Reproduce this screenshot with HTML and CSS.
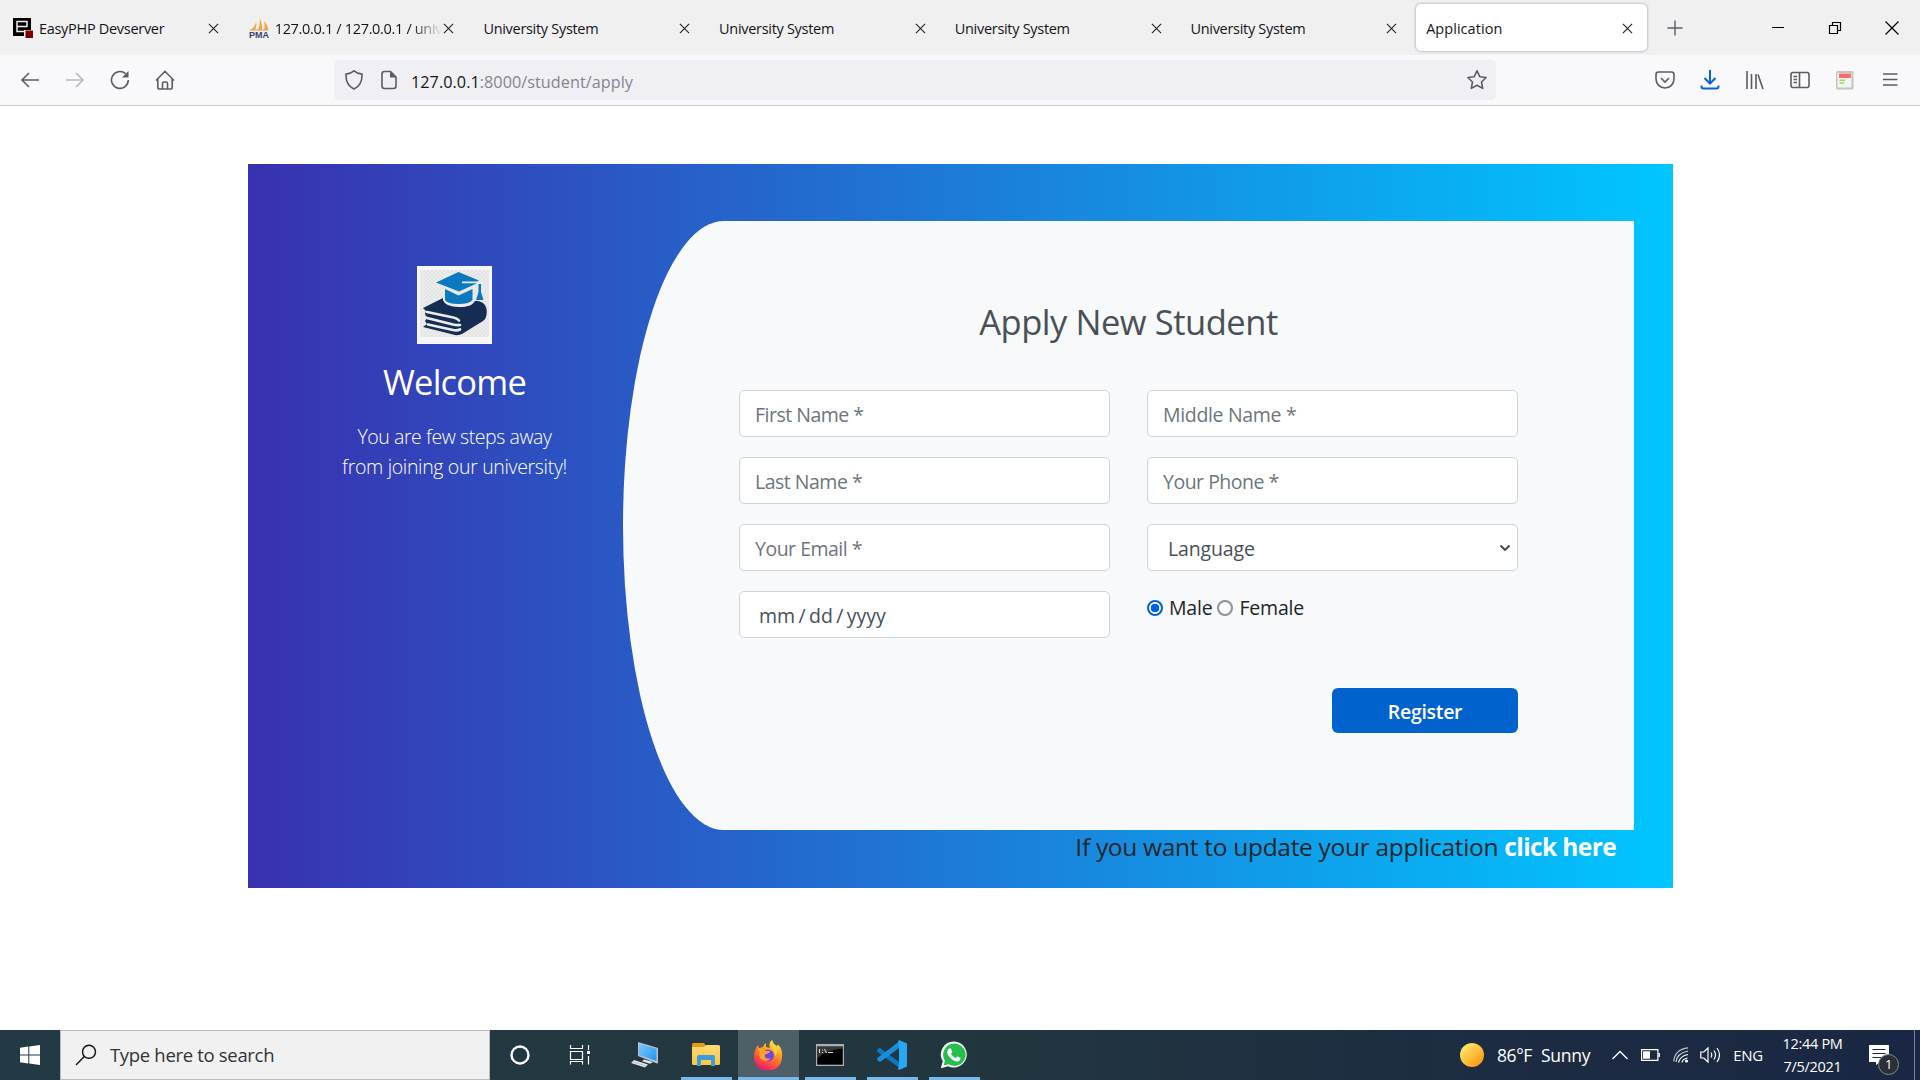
FILE: index.html
```html
<!DOCTYPE html>
<html lang="en">
<head>
<meta charset="utf-8">
<title>Application</title>
<link rel="stylesheet" href="styles.css">
</head>
<body>
<svg class="defs" width="0" height="0">
  <defs>
    <symbol id="x" viewBox="0 0 12 12"><path d="M1 1l10 10M11 1L1 11" fill="none" stroke="#222" stroke-width="1.2"/></symbol>
    <linearGradient id="sun" x1="0" y1="0" x2="1" y2="1"><stop offset="0.15" stop-color="#ffe46b"/><stop offset="1" stop-color="#ff8c00"/></linearGradient>
    <linearGradient id="fox" x1="0.8" y1="0" x2="0.3" y2="1"><stop offset="0" stop-color="#fff44f"/><stop offset="0.35" stop-color="#ffa51e"/><stop offset="0.65" stop-color="#ff5a36"/><stop offset="1" stop-color="#f0107a"/></linearGradient>
    <linearGradient id="scr" x1="0" y1="0" x2="1" y2="1"><stop offset="0" stop-color="#7cc9fb"/><stop offset="1" stop-color="#2196f3"/></linearGradient>
    <linearGradient id="fold" x1="0" y1="0" x2="0" y2="1"><stop offset="0" stop-color="#ffd977"/><stop offset="1" stop-color="#fcc63c"/></linearGradient>
    <pattern id="check" width="4" height="4" patternUnits="userSpaceOnUse"><path fill="#e4e4e4" d="M0 0h4v4H0z"/><path fill="#ececec" d="M0 0h2v2H0zM2 2h2v2H2z"/></pattern>
  </defs>
</svg>

<header class="tabs">
  <div class="tab tab-icon">
    <svg class="fav" width="20" height="20" viewBox="0 0 20 20"><path fill="#000" d="M0 0h18v18H0z"/><path d="M14.5 8.500H4V3.500h10v5M4 8v5.500h8" fill="none" stroke="#efefef" stroke-width="1.500"/><path fill="#efefef" d="M11 12h9v8h-9z"/><path fill="#800000" d="M12.500 12.500H20V20h-7.500z"/></svg>
    <span>EasyPHP Devserver</span><svg class="close" width="11" height="11"><use href="#x"/></svg>
  </div>
  <div class="tab tab-icon">
    <svg class="fav pma" width="20" height="20" viewBox="0 0 20 20"><path fill="#f9a13a" d="M10.500 0c2 4 3 8 2.500 12H9c2-4 2-8 1.500-12zM7 3.500c.7 3 .2 6-1 8.500H2c3-2.500 4.500-5 5-8.500zM15 3c2.500 3 4 6 4.500 9H15c.8-3 .7-6 0-9z"/><path fill="#d9a05b" d="M1 11.500h18v1H1z"/><text x="0" y="19.500" class="pma-text" textLength="20" lengthAdjust="spacingAndGlyphs">PMA</text></svg>
    <span class="long-title">127.0.0.1 / 127.0.0.1 / univ</span><svg class="close" width="11" height="11"><use href="#x"/></svg>
  </div>
  <div class="tab"><span>University System</span><svg class="close" width="11" height="11"><use href="#x"/></svg></div>
  <div class="tab"><span>University System</span><svg class="close" width="11" height="11"><use href="#x"/></svg></div>
  <div class="tab"><span>University System</span><svg class="close" width="11" height="11"><use href="#x"/></svg></div>
  <div class="tab"><span>University System</span><svg class="close" width="11" height="11"><use href="#x"/></svg></div>
  <div class="tab active"><span>Application</span><svg class="close" width="11" height="11"><use href="#x"/></svg></div>
  <svg class="plus" width="16" height="16" viewBox="0 0 16 16"><path d="M8 .5v15M.5 8h15" stroke="#5b5b66" stroke-width="1.400"/></svg>
  <div class="window-buttons">
    <svg width="14" height="14" viewBox="0 0 14 14"><path d="M1 6.500h12" stroke="#000"/></svg>
    <svg width="14" height="14" viewBox="0 0 14 14"><path d="M1.500 4.500h8v8h-8zM4.500 4V1.500h8v8H10" fill="none" stroke="#000" stroke-width="1.200"/></svg>
    <svg width="14" height="14" viewBox="0 0 14 14"><path d="M.5.5l13 13M13.500.5l-13 13" stroke="#000" stroke-width="1.200"/></svg>
  </div>
</header>

<nav class="toolbar">
  <div class="nav-icons">
    <svg width="20" height="20" viewBox="0 0 20 20"><path d="M19 10H2M9 3L2 10l7 7" class="ln"/></svg>
    <svg width="20" height="20" viewBox="0 0 20 20" opacity=".4"><path d="M1 10h17M11 3l7 7-7 7" class="ln"/></svg>
    <svg width="20" height="20" viewBox="0 0 20 20"><path d="M18.300 10A8.400 8.400 0 1 1 15.500 3.700" class="ln"/><path d="M18.500 1v6.500H12z" fill="#5b5b66"/></svg>
    <svg width="20" height="20" viewBox="0 0 20 20"><path d="M1 10.500L10 1.300l9 9.200M2.800 9v8.200q0 1.800 1.800 1.800h10.800q1.800 0 1.800-1.800V9M7.500 19v-5.500q0-1.500 1.500-1.500h2q1.500 0 1.500 1.500V19" class="ln"/></svg>
  </div>
  <div class="urlbar">
    <svg width="20" height="20" viewBox="0 0 20 20"><path d="M10 .9c2 1.800 5 2.800 8 3.200.3 7-2.500 12.500-8 15C4.500 16.600 1.700 11.100 2 4.100c3-.4 6-1.400 8-3.200z" class="ln"/></svg>
    <svg width="20" height="20" viewBox="0 0 20 20"><path d="M11.500 1.500h-6Q3 1.500 3 4v12q0 2.500 2.500 2.500h9Q17 18.500 17 16V7z" class="ln"/><path d="M11 1.500V7.500h6z" fill="#5b5b66"/></svg>
    <span class="url"><b>127.0.0.1</b>:8000/student/apply</span>
    <svg class="star" width="22" height="22" viewBox="0 0 22 22"><path d="M11 1.800l2.800 5.900 6.300.8-4.600 4.500 1.200 6.400L11 16.300l-5.700 3.100 1.200-6.400-4.600-4.500 6.300-.8z" class="ln" stroke-linejoin="round"/></svg>
  </div>
  <div class="tool-icons">
    <svg width="20" height="20" viewBox="0 0 20 20"><path d="M3.500 2h13Q19 2 19 4.500V9A9 9 0 0 1 1 9V4.500Q1 2 3.500 2z" class="ln"/><path d="M6 8l4 4 4-4" class="ln" stroke-width="1.800"/></svg>
    <svg width="20" height="20" viewBox="0 0 20 20"><path d="M10 0v13M4.500 8L10 13.500 15.500 8M1.500 15.500v1q0 2 2 2h13q2 0 2-2v-1" class="ln blue"/></svg>
    <svg width="20" height="20" viewBox="0 0 20 20"><path d="M2 1v18M6.500 4v15M11 4v15M13 4.500L18 19" class="ln"/></svg>
    <svg width="20" height="20" viewBox="0 0 20 20"><path d="M3 2.500h14q2 0 2 2v11q0 2-2 2H3q-2 0-2-2v-11q0-2 2-2zM9.500 2.500v15M3.500 6.500h3.500M3.500 9.500h3.500M3.500 12.500h3.500" class="ln"/></svg>
    <svg width="20" height="20" viewBox="0 0 20 20"><rect x="1" y="1" width="17.500" height="18.500" rx="1.500" fill="#c4c4c0"/><path fill="#f4f4f2" d="M2.500 3h14v14.500h-14z"/><path fill="#ff6b6b" d="M4 3.500h12V8H4z"/><path d="M4.500 10.200H10M4.500 13H9" stroke="#9ed36a" stroke-width="1.500"/></svg>
    <svg width="20" height="20" viewBox="0 0 20 20"><path d="M3 4h14.500M3 9.500h14.500M3 15h14.500" class="ln"/></svg>
  </div>
</nav>

<main>
  <section class="card">
    <aside>
      <svg class="logo" width="75" height="78" viewBox="0 0 75 78">
        <path fill="#f6f6f6" d="M0 0h75v78H0z"/><path fill="url(#check)" d="M3 4h69v67H3z"/>
        <path fill="#152c53" d="M6 42L26 32c-1 9 28 12 32 3 9-1 13 6 11.500 14Q69 53 66 55L45 68Q42 69.500 38 69L6 61l4-3-2-3 2-3-2-4 1-3z"/>
        <path fill="none" stroke="#ececec" stroke-width="2.700" stroke-linecap="round" d="M10 46l24 5q6 1 8 3.500M10 52l26 6.500q4 .8 7 .5M11 58.500l25 5.500q4 .8 7-.5"/>
        <path fill="none" stroke="#eee" stroke-width="2" d="M27 32v2q2 6 15 6t14-6v-4"/>
        <path fill="#0a79bf" d="M19 16.500L41.500 6 62 14.500 60 15.500H45v1.800h15L42 25.500zM28 23l13.500 6.500L55.500 23v11q-3 4-14 4t-13.500-4zM61.500 18H64v8l2.500 8h-7.500l2.500-8z"/>
      </svg>
      <h3>Welcome</h3>
      <p><span class="line-a">You are few steps away</span><br>from joining our university!</p>
    </aside>
    <div class="right">
      <div class="panel">
        <h2>Apply New Student</h2>
        <div class="form">
          <div class="control">First Name *</div>
          <div class="control middle">Middle Name *</div>
          <div class="control">Last Name *</div>
          <div class="control">Your Phone *</div>
          <div class="control">Your Email *</div>
          <div class="control select"><span>Language</span><svg width="12" height="8" viewBox="0 0 12 8"><path d="M1.500 1.500L6 6l4.500-4.500" fill="none" stroke="#3c4248" stroke-width="1.900"/></svg></div>
          <div class="control date">mm / dd / yyyy</div>
          <div class="radios"><i class="radio on"></i><span class="male">Male</span><i class="radio"></i><span>Female</span></div>
        </div>
        <div class="actions"><button>Register</button></div>
      </div>
      <div class="update">If you want to update your application <b>click here</b></div>
    </div>
  </section>
</main>

<footer class="taskbar">
  <div class="start"><svg width="20" height="20" viewBox="0 0 20 20"><path fill="#fff" d="M0 2.800l8.300-1.200V9.500H0zM9.300 1.400L20 0v9.500H9.300zM0 10.500h8.300v8L0 17.300zM9.300 10.500H20V20L9.300 18.600z"/></svg></div>
  <div class="search"><svg width="22" height="22" viewBox="0 0 22 22"><circle cx="14" cy="7.800" r="6.500" fill="none" stroke="#111" stroke-width="1.400"/><path d="M9.300 12.600L1 21" stroke="#111" stroke-width="1.400"/></svg><span>Type here to search</span></div>
  <div class="apps">
    <div class="app"><svg width="22" height="22" viewBox="0 0 22 22"><circle cx="11" cy="11" r="8.500" fill="none" stroke="#fff" stroke-width="2.400"/></svg></div>
    <div class="app"><svg width="22" height="22" viewBox="0 0 22 22"><path d="M1.500 1v3.500h12V1M1.500 7.500h12v8h-12zM1.500 20.500v-3h12v3M19.500 1v5M19.500 12v8.500" fill="none" stroke="#fff" stroke-width="1.200"/><path fill="#fff" d="M18 7h3v3h-3z"/></svg></div>
    <div class="app pc"><svg width="30" height="28" viewBox="0 0 30 28"><path fill="#b8c3cb" d="M8 1l20 6v15l-1 .5L8 15z"/><path fill="url(#scr)" d="M9 2.500l17.500 5.200V20L9 14z"/><path fill="#e2e6e9" d="M14 18.500l9 2.500-3 1.800-8-2.500zM4 19l14 4.500-3 3L1 22z"/><path d="M3 20.800l13 4.200" stroke="#aab" stroke-width=".7"/></svg></div>
    <div class="app open"><svg width="28" height="24" viewBox="0 0 28 24"><path fill="#e0a00d" d="M0 1.500Q0 0 1.500 0H12l2 3v3H0z"/><path fill="url(#fold)" d="M0 4h12l2-2h12.500Q28 2 28 3.500v17Q28 22 26.500 22h-25Q0 22 0 20.500z"/><path fill="#3d9be0" d="M5 23V14q0-2 2-2h14q2 0 2 2v9h-4v-6H9v6z"/></svg></div>
    <div class="app open current"><svg width="30" height="30" viewBox="0 0 30 30"><path fill="url(#fox)" d="M2 11q.5-3 3-6l1 3.500q2-1.500 4-1.500Q11 4 13 3v4l4 1q-2-5 2-8 1 4 5 6 1-1 1-1.500 5 5 4 13A14 14 0 0 1 1 16.500Q1 13 2 11z"/><circle cx="15" cy="15.500" r="6" fill="#7542e5"/><path fill="#ffa32b" d="M5 8.500q5-1 8 2.500h4q0 2-4 3-2 1.500-1 3 2 3 6 1-4 5-9 2-4-3-2-8z"/><path fill="#ffd43b" d="M19 0q-3 4 0 8 3 3 3 8 3-3 1-9-3-3-4-7z"/></svg></div>
    <div class="app open"><svg width="28" height="22" viewBox="0 0 28 22"><path fill="#a9afb5" d="M0 0h28v22H0z"/><path fill="#000" d="M1.200 2.500h25.600v18.200H1.200z"/><path fill="#4b4b4b" d="M1.200 2.500h25.600v2Q10 6 1.200 14z" opacity=".75"/><path d="M3.500 5v4M6.500 5.500v1M6.500 8v1M8.500 5l2 4M12 8.500h5" stroke="#ddd"/></svg></div>
    <div class="app open"><svg width="30" height="30" viewBox="0 0 30 30"><path fill="#0d78c4" d="M0 10l2-2 1.500.2L22 22v5.500L.5 12z"/><path fill="#1a8ddb" d="M0 19.500l2 2.200 1.700-.2L22 8V1.500L.5 18z"/><path fill="#2aa7f2" d="M22 0l8 3.500v23L22 30l-1-1 1-5V6l-1-4z"/></svg></div>
    <div class="app open"><svg width="28" height="28" viewBox="0 0 28 28"><path fill="#fff" d="M14.300.5a13 13 0 1 1-6.200 24.700L.8 27.300l2-7A13 13 0 0 1 14.300.5z"/><path fill="#25c04c" d="M14.300 2.500A11.200 11.200 0 1 1 8.500 23.200L3.600 24.600 5 19.800A11.200 11.200 0 0 1 14.300 2.500z"/><path fill="#fff" d="M9.300 7.500h1.500l1.500 3.500-1.300 1.800q1.500 3 4.500 4.400l1.700-1.900 3.300 1.700q0 3-3 3.500-3.500.3-7.500-4T7.500 10q.5-2 1.800-2.500z"/></svg></div>
  </div>
  <div class="tray">
    <svg width="24" height="24" viewBox="0 0 24 24"><circle cx="12" cy="12" r="12" fill="url(#sun)"/></svg>
    <span class="temp">86°F</span><span class="sunny">Sunny</span>
    <svg class="up" width="16" height="10" viewBox="0 0 16 10"><path d="M.5 9L8 1.500 15.500 9" fill="none" stroke="#fff" stroke-width="1.300"/></svg>
    <svg class="bat" width="19" height="12" viewBox="0 0 19 12"><path d="M.6.6h16.300v10.800H.6zM18.300 4v4" fill="none" stroke="#fff" stroke-width="1.200"/><path fill="#fff" d="M2 2.300h7v7.400H2z"/></svg>
    <svg class="wifi" width="16" height="16" viewBox="0 0 16 16"><g fill="none" stroke="#fff" stroke-width="1.200"><path d="M9 15.500q.5-3.500 5.500-4.500" /><path d="M5.500 15.500Q7 9 15 7.500"/><path d="M3 15Q3.500 6.500 15 4" opacity=".8"/><path d="M.8 14.500Q1.500 2.500 15 .8" opacity=".7"/></g><circle cx="13.500" cy="14" r="1.600" fill="#fff"/></svg>
    <svg class="vol" width="21" height="18" viewBox="0 0 21 18"><path d="M.8 6h3L8 2v14l-4.200-4h-3z" fill="none" stroke="#fff" stroke-width="1.200"/><path d="M11 6.500q1.500 2.500 0 5M14 4.500q3 4.500 0 9M17 2q5 7 0 14" fill="none" stroke="#fff" stroke-width="1.200"/></svg>
    <span class="eng">ENG</span>
    <div class="clock"><span>12:44 PM</span><span>7/5/2021</span></div>
    <div class="notes"><svg width="20" height="20" viewBox="0 0 20 20"><path fill="#fff" d="M0 0h20v17h-9l-4 3v-3H0z"/><path d="M3.500 4.500h13M3.500 8.500h13M3.500 12.500h9" stroke="#1b2944" stroke-width="1.200"/></svg><span class="badge">1</span></div>
    <i class="peek"></i>
  </div>
</footer>
</body>
</html>
```
FILE: styles.css
```css
* { box-sizing: border-box; }
body { margin: 0; width: 1920px; height: 1080px; overflow: hidden; display: flex; flex-direction: column; background: #fff; color: #212529; font-family: "Open Sans", sans-serif; font-size: 19.5px; }
svg { display: block; flex: none; }
span, b { white-space: nowrap; }
.defs { position: absolute; }
.ln { fill: none; stroke: #5b5b66; stroke-width: 1.6; }
.ln.blue { stroke: #0561e0; stroke-width: 2; }

.tabs { height: 55px; background: #f0f0f0; display: flex; align-items: center; padding: 0 21px 0 2px; font-size: 14.5px; letter-spacing: -.3px; color: #15141a; }
.tab { width: 231px; height: 47px; margin-right: 4.7px; border-radius: 5px; display: flex; align-items: center; padding: 1px 14px 0 10px; flex: none; }
.tab .close { margin-left: auto; }
.tab span { padding-top: 1px; }
.tab-icon { padding-left: 11px; }
.fav { margin-right: 6px; }
.pma-text { font: bold 8.500px "Liberation Sans", sans-serif; letter-spacing: 0; fill: #3b3f74; }
.long-title { width: 166px; letter-spacing: -.33px; -webkit-mask-image: linear-gradient(90deg, #000 137px, transparent 167px); mask-image: linear-gradient(90deg, #000 137px, transparent 167px); }
.long-title + .close { margin-left: 2px; }
.tab.active { background: #fff; box-shadow: 0 0 3px #8f8fa0; letter-spacing: .05px; }
.plus { margin-left: 15px; }
.window-buttons { margin-left: auto; display: flex; gap: 43px; }

.toolbar { height: 51px; background: #f9f9fb; border-bottom: 1px solid #ccc; display: flex; align-items: center; padding: 0 20px; }
.nav-icons { display: flex; gap: 25px; width: 314px; }
.urlbar { width: 1162px; height: 40px; background: #f0f0f4; border-radius: 5px; display: flex; align-items: center; padding: 0 8px 0 10px; gap: 15px; }
.url { font-size: 16.2px; letter-spacing: .05px; color: #85858c; margin-left: -3px; padding-top: 3px; }
.url b { color: #15141a; font-weight: 400; }
.star { margin-left: auto; }
.tool-icons { margin-left: auto; display: flex; gap: 25px; }

main { flex: 1; padding: 58px 0 0 248px; }
.card { width: 1425px; height: 724px; padding-top: 57px; display: flex; background: linear-gradient(90deg, #3931af, #00c6ff); }
aside { width: 337px; margin-left: 38px; padding-top: 45px; color: #fff; display: flex; flex-direction: column; align-items: center; text-align: center; }
h2, h3 { margin: 0; font-weight: 400; font-size: 34.5px; line-height: 42px; letter-spacing: -.45px; }
h3 { margin-top: 17px; letter-spacing: -.8px; }
p { margin: 19px 0 0; font-weight: 300; line-height: 30px; letter-spacing: -.33px; }
.line-a { letter-spacing: -.43px; }
.right { width: 1011px; }
.panel { height: 609px; background: #f8f9fa; border-radius: 10% 0 0 10% / 50% 0 0 50%; padding: 80px 116px 0; }
h2 { text-align: center; color: #495057; }
.form { display: grid; grid-template-columns: 371px 371px; column-gap: 37px; row-gap: 20px; margin-top: 47px; }
.control { height: 47px; background: #fff; border: 1px solid #ced4da; border-radius: 5px; color: #6c757d; padding: 1px 6px 0 15px; display: flex; align-items: center; letter-spacing: -.5px; }
.middle { letter-spacing: -.33px; }
.select, .date { color: #495057; }
.select { padding-left: 20px; letter-spacing: -.15px; }
.select svg { margin-left: auto; }
.date { padding-left: 19px; letter-spacing: 0; word-spacing: -1.7px; }
.radios { display: flex; align-items: center; height: 34px; letter-spacing: -.2px; }
.radios span { margin-top: -1px; }
.radio { width: 16px; height: 16px; border: 2px solid #8f8f9d; border-radius: 50%; background: #fff; margin-right: 6px; }
.radio.on { border-color: #0060df; background: radial-gradient(#0060df 4px, #fff 4.6px); }
.male { margin-right: 5px; }
.actions { display: flex; justify-content: flex-end; margin-top: 50px; }
button { width: 186px; height: 45px; border: 0; border-radius: 6px; background: #0062cc; color: #fff; font: 600 19.5px "Open Sans", sans-serif; letter-spacing: -.3px; padding: 2px 0 0; }
.update { text-align: right; padding-right: 18px; font-size: 24.5px; line-height: 34px; letter-spacing: -.3px; }
.update b { color: #fff; letter-spacing: -.62px; }

.taskbar { height: 50px; display: flex; background: linear-gradient(90deg, #233a44 0, #22363f 50%, #1c2b42 80%, #1a2744 100%); color: #fff; }
.start { width: 60px; display: grid; place-items: center; }
.search { width: 430px; background: #f1f1f1; border: 1px solid #bbb; color: #333; display: flex; align-items: center; padding: 0 0 1px 14px; gap: 13px; font-size: 18.5px; letter-spacing: -.32px; }
.apps { display: flex; }
.app { width: 60px; height: 50px; display: grid; place-items: center; }
.pc { width: 71px; padding-right: 2px; }
.open { width: 51px; margin-right: 6px; border-bottom: 3px solid #76b9ed; padding: 3px 1px 0 0; }
.current { width: 61px; background: #4e5f67; }
.open ~ .open:not(.current) { margin-right: 11px; }
.tray { margin-left: auto; display: flex; align-items: center; font-size: 17.5px; letter-spacing: -.25px; }
.temp { margin-left: 13px; letter-spacing: -.4px; }
.sunny { margin-left: 9px; }
.up { margin-left: 22px; }
.bat { margin-left: 13px; }
.wifi { margin-left: 13px; }
.vol { margin-left: 11px; }
.eng { margin-left: 12px; font-size: 15px; }
.clock { width: 59px; margin-left: 20px; display: flex; flex-direction: column; align-items: center; font-size: 14.5px; line-height: 23px; letter-spacing: -.3px; }
.notes { position: relative; margin-left: 27px; }
.badge { position: absolute; left: 9px; top: 9px; width: 21px; height: 21px; border: 1px solid #888; border-radius: 50%; background: #2a2f38; font-size: 13px; line-height: 19px; text-align: center; }
.peek { width: 6px; height: 50px; margin-left: 25px; border-left: 1px solid #7b8494; }
```
